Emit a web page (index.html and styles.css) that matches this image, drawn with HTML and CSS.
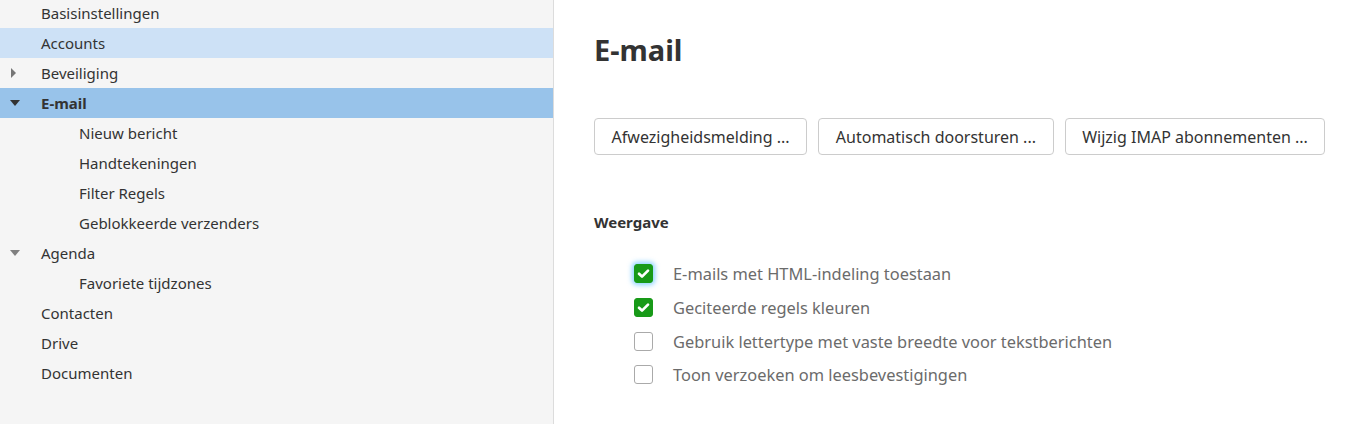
FILE: index.html
```html
<!DOCTYPE html>
<html lang="nl">
<head>
<meta charset="utf-8">
<title>Instellingen</title>
<link rel="stylesheet" href="styles.css">
</head>
<body>
<div class="app">
  <nav class="sidebar">
    <ul class="tree">
      <li class="row"><span class="caret"></span><span class="label">Basisinstellingen</span></li>
      <li class="row hover"><span class="caret"></span><span class="label">Accounts</span></li>
      <li class="row"><span class="caret"><span class="tri-right"></span></span><span class="label">Beveiliging</span></li>
      <li class="row selected"><span class="caret"><span class="tri-down dark"></span></span><span class="label bold">E-mail</span></li>
      <li class="row sub"><span class="label">Nieuw bericht</span></li>
      <li class="row sub"><span class="label">Handtekeningen</span></li>
      <li class="row sub"><span class="label">Filter Regels</span></li>
      <li class="row sub"><span class="label">Geblokkeerde verzenders</span></li>
      <li class="row"><span class="caret"><span class="tri-down"></span></span><span class="label">Agenda</span></li>
      <li class="row sub"><span class="label">Favoriete tijdzones</span></li>
      <li class="row"><span class="caret"></span><span class="label">Contacten</span></li>
      <li class="row"><span class="caret"></span><span class="label">Drive</span></li>
      <li class="row"><span class="caret"></span><span class="label">Documenten</span></li>
    </ul>
  </nav>
  <main class="content">
    <h1 class="title">E-mail</h1>
    <div class="buttons">
      <button class="btn">Afwezigheidsmelding ...</button>
      <button class="btn">Automatisch doorsturen ...</button>
      <button class="btn">Wijzig IMAP abonnementen ...</button>
    </div>
    <h2 class="section">Weergave</h2>
    <div class="options">
      <label class="option"><span class="box checked focus"><svg viewBox="0 0 19 19" width="19" height="19"><path d="M5 9.8 L8 12.6 L14 6.6" fill="none" stroke="#fff" stroke-width="2.7" stroke-linecap="round" stroke-linejoin="round"/></svg></span><span class="text">E-mails met HTML-indeling toestaan</span></label>
      <label class="option"><span class="box checked"><svg viewBox="0 0 19 19" width="19" height="19"><path d="M5 9.8 L8 12.6 L14 6.6" fill="none" stroke="#fff" stroke-width="2.7" stroke-linecap="round" stroke-linejoin="round"/></svg></span><span class="text">Geciteerde regels kleuren</span></label>
      <label class="option"><span class="box"></span><span class="text">Gebruik lettertype met vaste breedte voor tekstberichten</span></label>
      <label class="option"><span class="box"></span><span class="text">Toon verzoeken om leesbevestigingen</span></label>
    </div>
  </main>
</div>
</body>
</html>
```

FILE: styles.css
```css
html, body {
  margin: 0;
  padding: 0;
  height: 100%;
  overflow: hidden;
}
body {
  font-family: "Noto Sans", "Open Sans", sans-serif;
  color: #333;
  background: #fff;
}
.app {
  display: flex;
  height: 424px;
}
.sidebar {
  width: 553px;
  flex: none;
  background: #f5f5f5;
  border-right: 1px solid #dcdcdc;
}
.tree {
  list-style: none;
  margin: -2px 0 0 0;
  padding: 0;
}
.row {
  height: 30px;
  display: flex;
  align-items: center;
  font-size: 15px;
  color: #333;
}
.row.hover { background: #cde1f6; }
.row.selected { background: #98c3ea; }
.caret {
  width: 41px;
  flex: none;
  display: flex;
  align-items: center;
  padding-left: 10px;
  box-sizing: border-box;
}
.row.sub { padding-left: 79px; }
.label.bold { font-weight: 700; }
.tri-right {
  width: 0; height: 0;
  margin-left: 1px;
  border-top: 5px solid transparent;
  border-bottom: 5px solid transparent;
  border-left: 5px solid #767676;
}
.tri-down {
  width: 0; height: 0;
  border-left: 5px solid transparent;
  border-right: 5px solid transparent;
  border-top: 6px solid #808080;
}
.tri-down.dark { border-top-color: #333; }

.content {
  flex: 1;
  padding: 0 0 0 40px;
}
.title {
  margin: 30px 0 0 0;
  font-size: 29px;
  font-weight: 700;
  line-height: 40px;
  color: #333;
}
.buttons {
  display: flex;
  gap: 11px;
  margin-top: 48px;
}
.btn {
  font-family: inherit;
  font-size: 16px;
  color: #333;
  background: #fff;
  border: 1px solid #ccc;
  border-radius: 4px;
  height: 37px;
  padding: 0 16.6px;
  cursor: pointer;
}
.section {
  margin: 57px 0 0 0;
  font-size: 15px;
  font-weight: 700;
  line-height: 20px;
  color: #333;
}
.options {
  margin-top: 25px;
  padding-left: 40px;
  display: flex;
  flex-direction: column;
}
.option {
  display: flex;
  align-items: center;
  height: 33.7px;
  font-size: 16.4px;
  color: #6b6b6b;
}
.box {
  width: 19px;
  height: 19px;
  box-sizing: border-box;
  border: 1px solid #aaa;
  border-radius: 3px;
  background: #fff;
  margin-right: 20px;
  display: flex;
  flex: none;
}
.box.checked {
  background: #189a18;
  border-color: #189a18;
}
.box.checked svg { margin: -1px; }
.box.focus {
  box-shadow: 0 0 5px 2px rgba(60, 180, 255, 0.6);
}
```
